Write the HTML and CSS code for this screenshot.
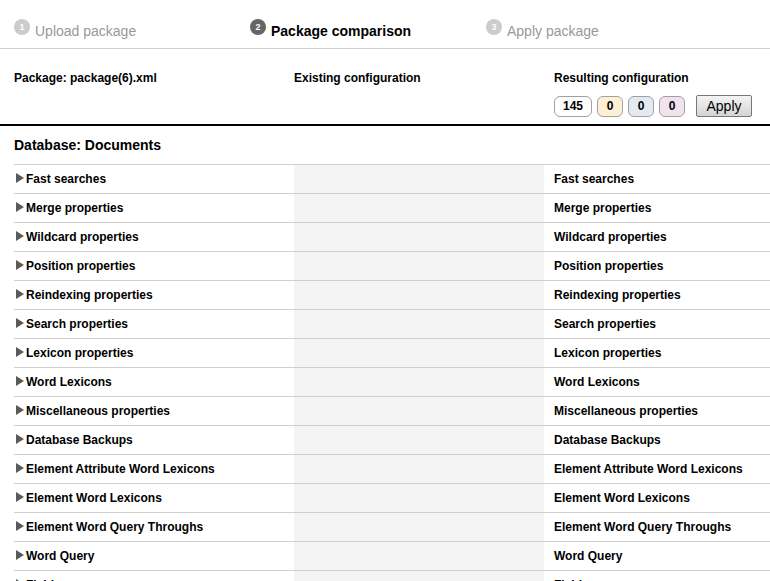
FILE: index.html
```html
<!DOCTYPE html>
<html lang="en">
<head>
    <meta charset="UTF-8" />
    <title>Package comparison</title>
    <link rel="stylesheet" href="styles.css">
</head>
<body>
    <!-- Wizard steps -->
    <div class="steps">
        <div class="step step-one"><span class="step-num">1</span>Upload package</div>
        <div class="step step-two current"><span class="step-num">2</span>Package comparison</div>
        <div class="step step-three"><span class="step-num">3</span>Apply package</div>
    </div>

    <!-- Column headers -->
    <div class="compare-head">
        <div class="col col-pkg">Package: package(6).xml</div>
        <div class="col col-existing">Existing configuration</div>
        <div class="col col-result">
            <div>Resulting configuration</div>
            <div class="counts">
                <span class="count count-all">145</span>
                <span class="count count-add">0</span>
                <span class="count count-mod">0</span>
                <span class="count count-del">0</span>
                <button class="apply-btn">Apply</button>
            </div>
        </div>
    </div>

    <div class="db">
        <h2>Database: Documents</h2>
        <div class="rows" id="rows"></div>
    </div>

    <script>
        var items = [
            'Fast searches',
            'Merge properties',
            'Wildcard properties',
            'Position properties',
            'Reindexing properties',
            'Search properties',
            'Lexicon properties',
            'Word Lexicons',
            'Miscellaneous properties',
            'Database Backups',
            'Element Attribute Word Lexicons',
            'Element Word Lexicons',
            'Element Word Query Throughs',
            'Word Query',
            'Fields'
        ];
        var rows = document.getElementById('rows');
        items.forEach(function (name) {
            var row = document.createElement('div');
            row.className = 'row';
            row.innerHTML =
                '<div class="cell cell-pkg"><span class="arrow"></span>' + name + '</div>' +
                '<div class="cell cell-existing"></div>' +
                '<div class="cell cell-result">' + name + '</div>';
            rows.appendChild(row);
        });
    </script>
</body>
</html>
```

FILE: styles.css
```css
body {
    font-family: "Liberation Sans", Arial, sans-serif;
    color: #000;
    background: #fff;
    margin: 0;
    padding: 0;
    overflow: hidden;
}

.steps {
    display: flex;
    height: 49px;
    align-items: center;
    border-bottom: 1px solid #cfcfcf;
    padding-top: 14px;
    box-sizing: border-box;
    font-size: 14px;
    color: #999;
}

.step {
    display: flex;
    align-items: center;
}

.step-one { margin-left: 14px; width: 236px; }
.step-two { width: 236px; }

.step.current {
    color: #000;
    font-weight: bold;
}

.step-num {
    display: inline-block;
    width: 16px;
    height: 16px;
    border-radius: 50%;
    background: #ccc;
    color: #fff;
    font-size: 9px;
    font-weight: bold;
    line-height: 16px;
    text-align: center;
    margin-right: 5px;
    position: relative;
    top: -4px;
}

.step.current .step-num {
    background: #666;
}

.compare-head {
    display: flex;
    font-size: 12px;
    font-weight: bold;
    padding: 22px 0 0 14px;
    height: 77px;
    box-sizing: border-box;
    border-bottom: 2px solid #000;
}

.col-pkg { width: 280px; }
.col-existing { width: 260px; }

.counts {
    display: flex;
    align-items: center;
    margin-top: 10px;
}

.count {
    display: inline-block;
    height: 21px;
    line-height: 19px;
    padding: 0 6px;
    box-sizing: border-box;
    border: 1px solid #a0a0a0;
    border-radius: 6px;
    text-align: center;
    font-size: 12px;
    margin-right: 5px;
}

.count-all { width: 38px; background: #fff; }
.count-add { width: 26px; background: #fdf0d4; }
.count-mod { width: 26px; background: #e3eaf2; }
.count-del { width: 26px; background: #f1e3ed; }

.apply-btn {
    margin-left: 6px;
    height: 22px;
    width: 56px;
    font-family: "Liberation Sans", Arial, sans-serif;
    font-size: 14px;
    color: #000;
    border: 1px solid #777;
    border-radius: 2px;
    background: linear-gradient(#f4f4f4, #d4d4d4);
    padding: 0;
}

.db {
    padding-left: 14px;
}

.db h2 {
    font-size: 14px;
    margin: 0;
    height: 38px;
    line-height: 38px;
}

.row {
    display: flex;
    height: 29px;
    border-top: 1px solid #d0d0d0;
    box-sizing: border-box;
    font-size: 12px;
    font-weight: bold;
}

.cell {
    display: flex;
    align-items: center;
}

.cell-pkg {
    width: 280px;
}

.cell-existing {
    width: 250px;
    background: #f4f4f4;
}

.cell-result {
    padding-left: 10px;
}

.arrow {
    display: inline-block;
    width: 0;
    height: 0;
    border-top: 5px solid transparent;
    border-bottom: 5px solid transparent;
    border-left: 8px solid #5a5a5a;
    margin: 0 2px 2px 2px;
}
```
